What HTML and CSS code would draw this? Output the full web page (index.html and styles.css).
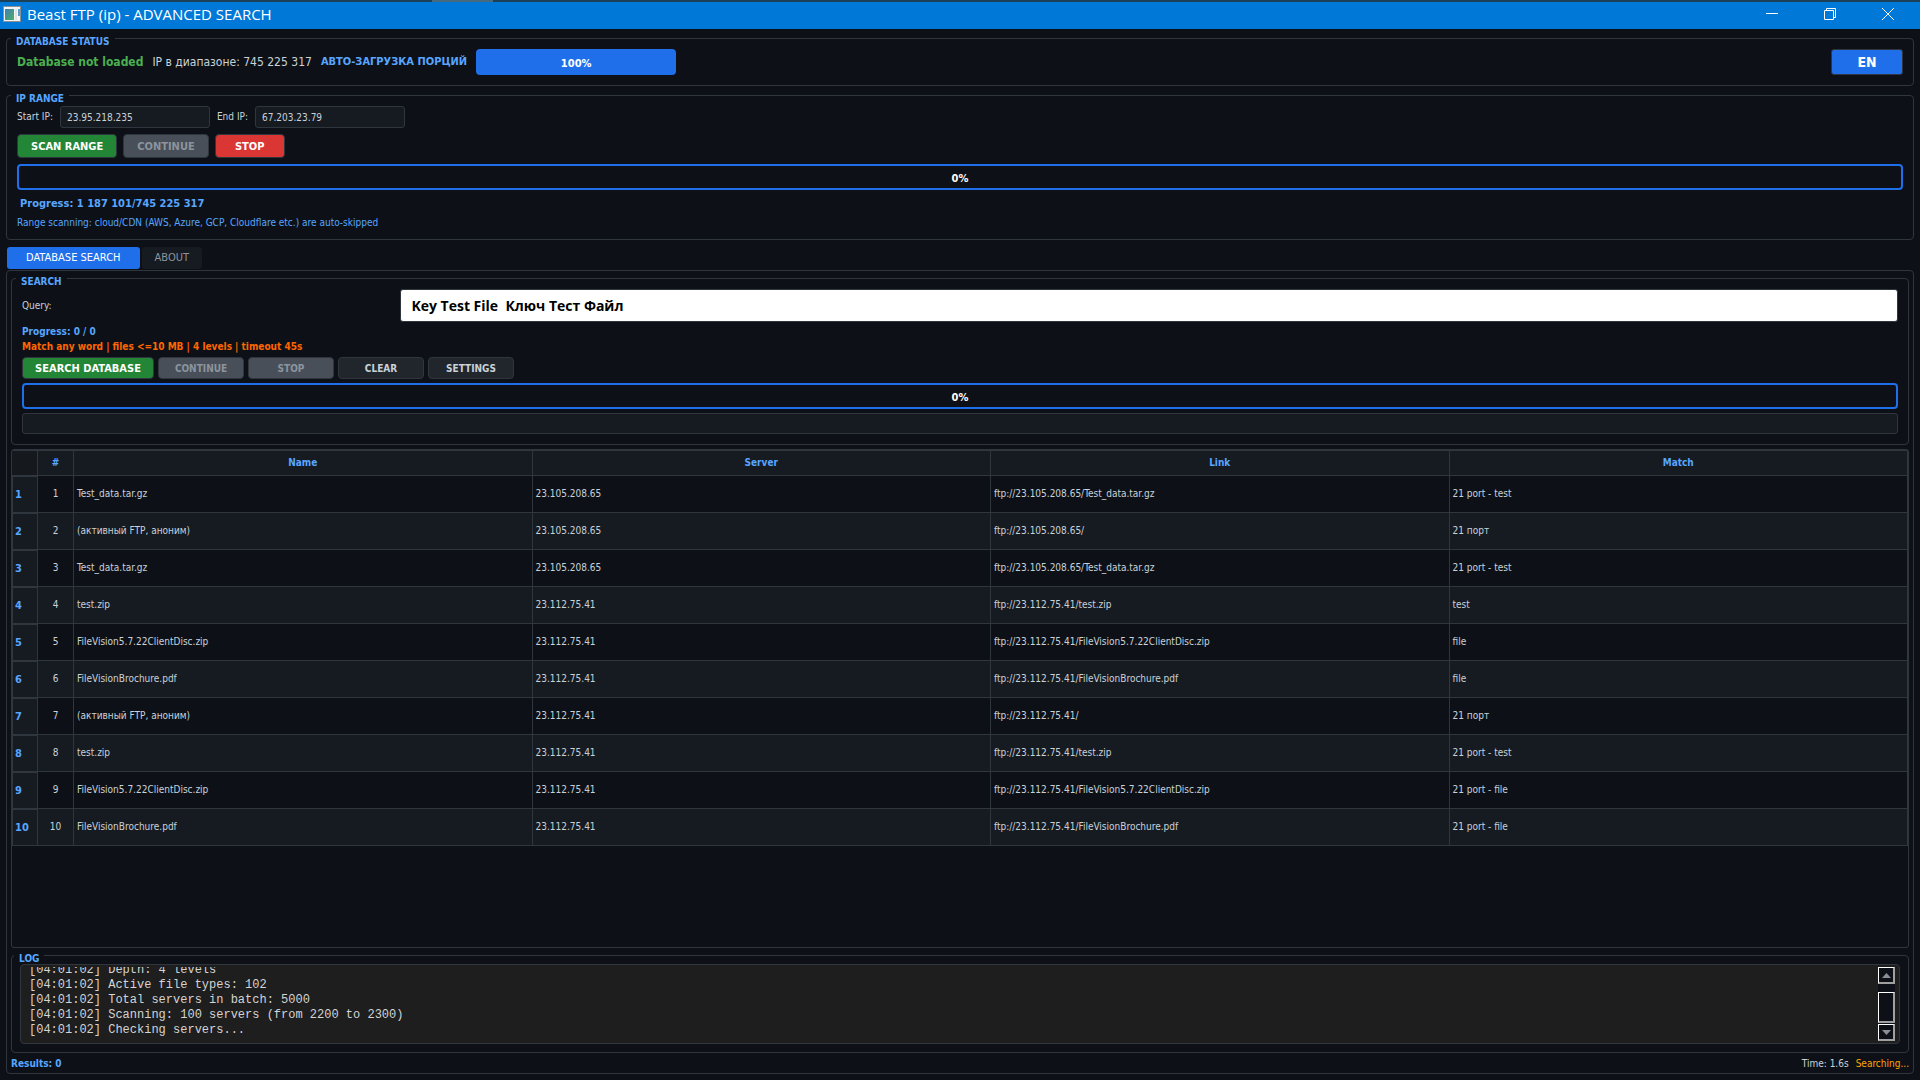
FILE: index.html
```html
<!DOCTYPE html>
<html lang="en">
<head>
<meta charset="utf-8">
<title>Beast FTP (ip) - ADVANCED SEARCH</title>
<link rel="stylesheet" href="styles.css">
</head>
<body>
<div class="desktop-strip"><span class="strip-tab"></span></div>
<header class="titlebar">
  <svg class="app-icon" width="18" height="16" viewBox="0 0 18 16" aria-hidden="true">
    <defs><linearGradient id="g" x1="0" y1="0" x2="1" y2="1"><stop offset="0" stop-color="#3f7fb5"/><stop offset="1" stop-color="#4fae62"/></linearGradient></defs>
    <rect x="0.500" y="0.500" width="17" height="15" fill="#f4f4f4" stroke="#8a8f94"/>
    <rect x="2" y="3" width="9" height="11" fill="url(#g)"/>
    <rect x="12" y="3" width="2" height="11" fill="#dfe4e8"/>
    <rect x="15" y="3" width="2" height="7" fill="#5b9fd0"/>
  </svg>
  <h1>Beast FTP (ip) - ADVANCED SEARCH</h1>
  <div class="window-buttons">
    <button type="button" aria-label="Minimize"><svg width="14" height="14" viewBox="0 0 14 14"><path d="M1 6.500H13" /></svg></button>
    <button type="button" aria-label="Restore"><svg width="14" height="14" viewBox="0 0 14 14"><path d="M1.500 3.500H10.500V12.500H1.500ZM3.500 3.500V1.500H12.500V10.500H10.500"/></svg></button>
    <button type="button" aria-label="Close"><svg width="14" height="14" viewBox="0 0 14 14"><path d="M1 1L13 13M13 1L1 13"/></svg></button>
  </div>
</header>

<main class="content">
  <fieldset class="group">
    <legend>DATABASE STATUS</legend>
    <div class="status-row">
      <span class="db-state">Database not loaded</span>
      <span class="ip-count">IP в диапазоне: 745 225 317</span>
      <span class="auto-load">АВТО-ЗАГРУЗКА ПОРЦИЙ</span>
      <div class="bar full" role="progressbar" aria-valuenow="100">100%</div>
      <button type="button" class="lang">EN</button>
    </div>
  </fieldset>

  <fieldset class="group">
    <legend>IP RANGE</legend>
    <div class="range-row">
      <label for="start">Start IP:</label><input class="field ip" id="start" value="23.95.218.235">
      <label for="end">End IP:</label><input class="field ip" id="end" value="67.203.23.79">
    </div>
    <div class="range-buttons">
      <button type="button" class="btn tall green">SCAN RANGE</button>
      <button type="button" class="btn tall" disabled>CONTINUE</button>
      <button type="button" class="btn tall red">STOP</button>
    </div>
    <div class="bar" role="progressbar" aria-valuenow="0">0%</div>
    <p class="range-progress">Progress: 1 187 101/745 225 317</p>
    <p class="range-note">Range scanning: cloud/CDN (AWS, Azure, GCP, Cloudflare etc.) are auto-skipped</p>
  </fieldset>

  <nav class="tabs">
    <button type="button" class="tab active">DATABASE SEARCH</button>
    <button type="button" class="tab">ABOUT</button>
  </nav>

  <section class="pane">
    <fieldset class="group search">
      <legend>SEARCH</legend>
      <div class="query-row">
        <label for="query">Query:</label>
        <input id="query" class="query" value="Key Test File  Ключ Тест Файл">
      </div>
      <p class="search-progress">Progress: 0 / 0</p>
      <p class="match-info">Match any word | files &lt;=10 MB | 4 levels | timeout 45s</p>
      <div class="search-buttons">
        <button type="button" class="btn green main">SEARCH DATABASE</button>
        <button type="button" class="btn" disabled>CONTINUE</button>
        <button type="button" class="btn" disabled>STOP</button>
        <button type="button" class="btn">CLEAR</button>
        <button type="button" class="btn">SETTINGS</button>
      </div>
      <div class="bar" role="progressbar" aria-valuenow="0">0%</div>
      <input class="field current" aria-label="Current item" readonly>
    </fieldset>

    <div class="results">
      <table>
        <colgroup><col class="c-row"><col class="c-num"><col><col><col><col></colgroup>
        <thead><tr><td class="corner"></td><th>#</th><th>Name</th><th>Server</th><th>Link</th><th>Match</th></tr></thead>
        <tbody>
          <tr><th>1</th><td>1</td><td>Test_data.tar.gz</td><td>23.105.208.65</td><td>ftp://23.105.208.65/Test_data.tar.gz</td><td>21 port - test</td></tr>
          <tr><th>2</th><td>2</td><td>(активный FTP, аноним)</td><td>23.105.208.65</td><td>ftp://23.105.208.65/</td><td>21 порт</td></tr>
          <tr><th>3</th><td>3</td><td>Test_data.tar.gz</td><td>23.105.208.65</td><td>ftp://23.105.208.65/Test_data.tar.gz</td><td>21 port - test</td></tr>
          <tr><th>4</th><td>4</td><td>test.zip</td><td>23.112.75.41</td><td>ftp://23.112.75.41/test.zip</td><td>test</td></tr>
          <tr><th>5</th><td>5</td><td>FileVision5.7.22ClientDisc.zip</td><td>23.112.75.41</td><td>ftp://23.112.75.41/FileVision5.7.22ClientDisc.zip</td><td>file</td></tr>
          <tr><th>6</th><td>6</td><td>FileVisionBrochure.pdf</td><td>23.112.75.41</td><td>ftp://23.112.75.41/FileVisionBrochure.pdf</td><td>file</td></tr>
          <tr><th>7</th><td>7</td><td>(активный FTP, аноним)</td><td>23.112.75.41</td><td>ftp://23.112.75.41/</td><td>21 порт</td></tr>
          <tr><th>8</th><td>8</td><td>test.zip</td><td>23.112.75.41</td><td>ftp://23.112.75.41/test.zip</td><td>21 port - test</td></tr>
          <tr><th>9</th><td>9</td><td>FileVision5.7.22ClientDisc.zip</td><td>23.112.75.41</td><td>ftp://23.112.75.41/FileVision5.7.22ClientDisc.zip</td><td>21 port - file</td></tr>
          <tr><th>10</th><td>10</td><td>FileVisionBrochure.pdf</td><td>23.112.75.41</td><td>ftp://23.112.75.41/FileVisionBrochure.pdf</td><td>21 port - file</td></tr>
        </tbody>
      </table>
    </div>

    <fieldset class="group log">
      <legend>LOG</legend>
      <div class="log-box">
        <div class="log-lines" role="log">
          <p>[04:01:02] Depth: 4 levels</p>
          <p>[04:01:02] Active file types: 102</p>
          <p>[04:01:02] Total servers in batch: 5000</p>
          <p>[04:01:02] Scanning: 100 servers (from 2200 to 2300)</p>
          <p>[04:01:02] Checking servers...</p>
        </div>
        <div class="scrollbar">
          <button type="button" aria-label="Scroll up"><svg width="9" height="5" viewBox="0 0 9 5"><path d="M0 5L4.500 0L9 5Z"/></svg></button>
          <div class="thumb"></div>
          <button type="button" aria-label="Scroll down"><svg width="9" height="5" viewBox="0 0 9 5"><path d="M0 0L4.500 5L9 0Z"/></svg></button>
        </div>
      </div>
    </fieldset>

    <footer class="statusbar">
      <span class="count">Results: 0</span>
      <span>Time: 1.6s</span>
      <span class="searching">Searching...</span>
    </footer>
  </section>
</main>
</body>
</html>
```
FILE: styles.css
```css
:root {
  --bg: #0d1117;
  --panel: #161b22;
  --line: #30363d;
  --text: #c9d1d9;
  --blue: #1f6feb;
  --accent: #58a6ff;
  --ui: "DejaVu Sans Condensed", "DejaVu Sans", Tahoma, sans-serif;
}
* { box-sizing: border-box; }
body {
  margin: 0;
  min-height: 100vh;
  display: flex;
  flex-direction: column;
  background: var(--bg);
  color: var(--text);
  font: 10px/14px var(--ui);
}
p, h1 { margin: 0; }
button, input { font: inherit; color: inherit; margin: 0; }
button { padding: 0; }

.desktop-strip { height: 2px; background: #1c4057; display: flex; }
.strip-tab { width: 61px; margin-left: 432px; background: #486a7d; }
.titlebar {
  height: 27px;
  padding: 0 3px 3px;
  background: #0078d7;
  color: #fff;
  display: flex;
  align-items: center;
}
.titlebar h1 { margin-left: 6px; font: 15px/20px "Open Sans", "Noto Sans", sans-serif; }
.window-buttons { margin-left: auto; display: flex; align-self: stretch; }
.window-buttons button {
  width: 58px;
  border: 0;
  background: none;
  display: flex;
  align-items: center;
  justify-content: center;
}
.window-buttons svg { fill: none; stroke: #fff; }

.content {
  flex: 1;
  display: flex;
  flex-direction: column;
  gap: 2px;
  padding: 2px 6px 6px;
}
.group {
  margin: 0;
  min-width: 0;
  border: 1px solid var(--line);
  border-radius: 4px;
  padding: 3px 10px 10px;
}
.group legend {
  margin-left: -6px;
  padding: 6px 5px 0;
  color: var(--accent);
  font-size: 10px;
  font-weight: bold;
  line-height: 9px;
}

.status-row { display: flex; align-items: center; gap: 9px; font-size: 12px; }
.db-state { color: #4caf50; font-weight: bold; }
.auto-load { color: var(--accent); font-size: 11px; font-weight: bold; }
.lang {
  margin-left: auto;
  width: 72px;
  height: 26px;
  border: 1px solid var(--line);
  border-radius: 3px;
  background: var(--blue);
  color: #fff;
  font-size: 14px;
  font-weight: bold;
}
.bar {
  height: 26px;
  border: 2px solid var(--blue);
  border-radius: 4px;
  background: var(--bg);
  color: #fff;
  font-size: 11px;
  font-weight: bold;
  line-height: 25px;
  text-align: center;
}
.bar.full { width: 200px; background: var(--blue); }

.field {
  height: 22px;
  padding: 0 6px;
  border: 1px solid var(--line);
  border-radius: 3px;
  background: var(--panel);
}
.field.ip { width: 150px; }
.range-row { display: flex; align-items: center; gap: 7px; }
.range-buttons { display: flex; gap: 6px; margin: 6px 0; }
.btn {
  height: 22px;
  min-width: 86px;
  padding-top: 1px;
  border: 1px solid var(--line);
  border-radius: 4px;
  background: #21262d;
  font-size: 10px;
  font-weight: bold;
  text-align: center;
}
.btn.tall { height: 24px; min-width: 70px; padding: 1px 13px 0; font-size: 11px; }
.btn.green { background: #238636; color: #fff; }
.btn.red { background: #da3633; color: #fff; }
.btn:disabled { background: #484f58; color: #8b949e; }
.btn.main { width: 132px; font-size: 11px; }
.range-progress {
  padding: 7px 3px 5px;
  color: var(--accent);
  font-size: 11px;
  font-weight: bold;
}
.range-note { color: var(--accent); line-height: 13px; }

.tabs { display: flex; gap: 2px; padding: 5px 1px 0; }
.tab {
  height: 22px;
  padding: 0 13px;
  border: 0;
  border-radius: 3px;
  background: var(--panel);
  color: #8b949e;
  font-size: 11px;
}
.tab.active { padding: 0 19px; background: var(--blue); color: #fff; }

.pane {
  flex: 1;
  display: flex;
  flex-direction: column;
  margin-top: -1px;
  padding: 0 4px;
  border: 1px solid var(--line);
  border-radius: 4px;
}
.query-row { display: grid; grid-template-columns: 1fr 4fr; gap: 4px; align-items: center; }
.query {
  height: 33px;
  padding: 0 10px;
  border: 1px solid var(--line);
  border-radius: 3px;
  background: #fff;
  color: #000;
  font: 700 14px/20px "Open Sans", "Noto Sans", sans-serif;
  white-space: pre;
}
.search-progress { margin-top: 3px; color: var(--accent); font-weight: bold; }
.match-info { margin-top: 1px; color: #ff6600; font-weight: bold; }
.search-buttons { display: flex; gap: 4px; margin: 3px 0 4px; }
.current { display: block; width: 100%; height: 21px; margin-top: 4px; }

.results {
  flex: 1;
  margin-top: 4px;
  border: 1px solid var(--line);
  border-radius: 3px;
}
table { width: 100%; table-layout: fixed; border-collapse: separate; border-spacing: 0; }
.c-row { width: 26px; }
.c-num { width: 36px; }
td, th { height: 37px; padding: 0 3px; border: 0 solid var(--line); border-width: 0 1px 1px 0; }
tbody tr:nth-child(even) { background: var(--panel); }
tbody td:nth-child(2) { text-align: center; }
th { background: var(--panel); color: var(--accent); }
thead th { height: 26px; border-width: 1px 1px 1px 0; }
.corner { height: 26px; border-width: 1px 1px 1px 0; background: #15181c; }
tbody th { border-width: 1px; text-align: left; padding: 0 2px; font-size: 11px; }

.log { padding: 1px 8px 8px; }
.log-box {
  display: flex;
  height: 80px;
  padding: 2px 4px 2px 8px;
  border: 1px solid var(--line);
  border-radius: 4px;
  background: #1e1e1e;
}
.log-lines {
  flex: 1;
  display: flex;
  flex-direction: column;
  justify-content: flex-end;
  overflow: hidden;
  padding-bottom: 3px;
  color: #d4d4d4;
  font: 12px/15px "Liberation Mono", Consolas, monospace;
}
.scrollbar { width: 17px; display: flex; flex-direction: column; background: var(--bg); }
.scrollbar button, .thumb {
  height: 17px;
  border: 1px solid;
  border-width: 1px 2px 2px 1px;
  border-color: #fff #a0a0a0 #a0a0a0 #fff;
  background: var(--bg);
}
.scrollbar button { display: flex; align-items: center; justify-content: center; }
.scrollbar svg { fill: #8a8f94; }
.thumb { height: 31px; margin-top: auto; margin-bottom: 1px; }

.statusbar { display: flex; gap: 7px; padding: 4px 0 2px; }
.count { margin-right: auto; color: var(--accent); font-weight: bold; }
.searching { color: #ffa500; }
```
